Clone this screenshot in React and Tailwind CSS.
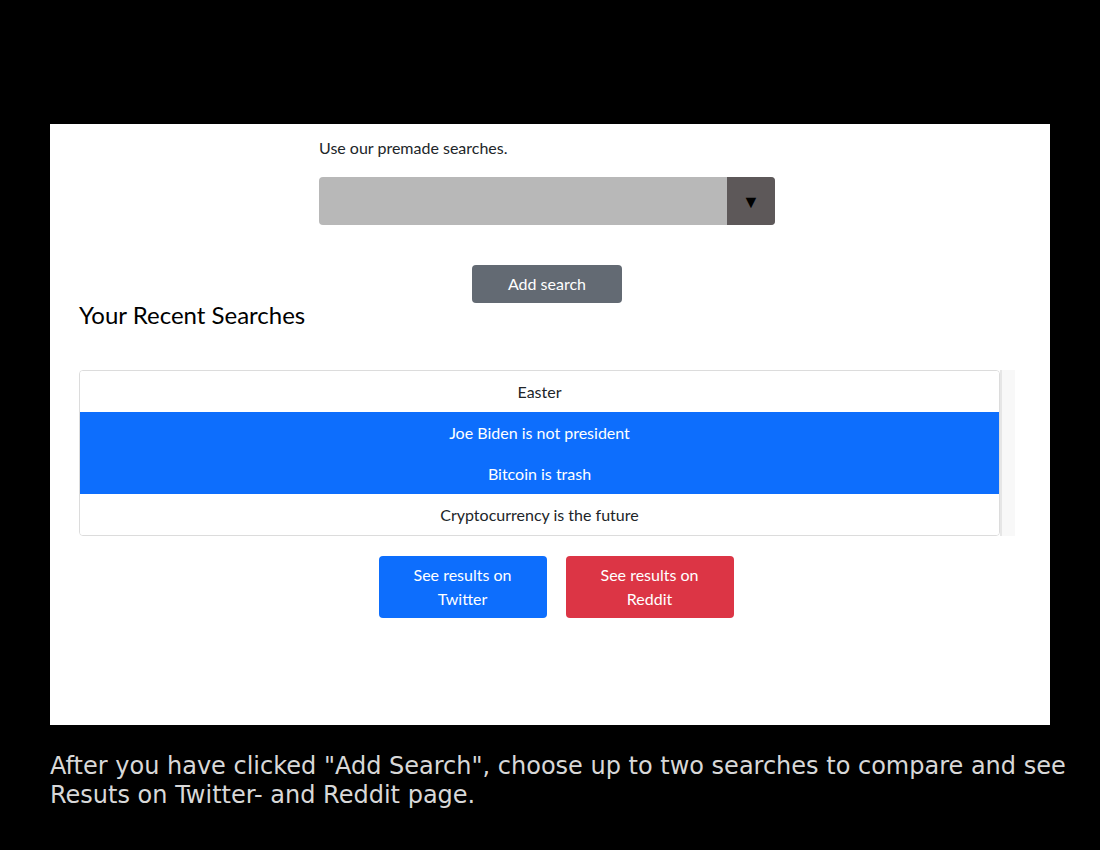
const recent = [
  { label: 'Easter', selected: false },
  { label: 'Joe Biden is not president', selected: true },
  { label: 'Bitcoin is trash', selected: true },
  { label: 'Cryptocurrency is the future', selected: false },
];

export default function App() {
  return (
    <div className="min-h-[850px] w-[1100px] bg-black pt-[124px]" style={{ fontFamily: 'Lato, "Noto Sans", sans-serif' }}>
      {/* White panel */}
      <div className="ml-[50px] h-[601px] w-[1000px] bg-white pl-[29px] pr-[35px] text-[#212529]">
        <div className="ml-[240px] w-[456px] pt-[14px]">
          <p className="text-[16px] leading-[20px]">Use our premade searches.</p>
          <div className="mt-[19px] flex h-[48px] overflow-hidden rounded-[4px] bg-[#b8b8b8]">
            <div className="flex-1" />
            <div className="flex w-[48px] items-center justify-center bg-[#5d5859] text-[18px] text-black">▼</div>
          </div>
        </div>

        <div className="mt-[40px] flex justify-center">
          <button className="h-[38px] w-[150px] rounded-[4px] bg-[#636a73] text-[16px] text-white">Add search</button>
        </div>

        <h2 className="-mt-[2px] text-[24px] leading-[28px] text-black">Your Recent Searches</h2>

        {/* Recent searches list */}
        <div className="mt-[41px] flex">
          <div className="w-[921px] overflow-hidden rounded-[4px] border border-[#dcdcdc]">
            {recent.map((r) => (
              <div
                key={r.label}
                className={`flex h-[41px] items-center justify-center text-[16px] ${r.selected ? 'bg-[#0d6efd] text-white' : 'bg-white text-[#212529]'}`}
              >
                {r.label}
              </div>
            ))}
          </div>
          <div className="w-[15px] border-l-[2px] border-[#e6e6e6] bg-[#f8f8f8]" />
        </div>

        <div className="mt-[20px] flex justify-center gap-[19px] pl-[18px]">
          <button className="h-[62px] w-[168px] rounded-[4px] bg-[#0d6efd] px-[20px] text-[16px] leading-[24px] text-white">
            See results on Twitter
          </button>
          <button className="h-[62px] w-[168px] rounded-[4px] bg-[#dc3545] px-[20px] text-[16px] leading-[24px] text-white">
            See results on Reddit
          </button>
        </div>
      </div>

      <p
        className="ml-[50px] mt-[27px] w-[1040px] text-[24px] leading-[29px] text-[#d8d8d8]"
        style={{ fontFamily: '"DejaVu Sans", sans-serif' }}
      >
        After you have clicked "Add Search", choose up to two searches to compare and see Resuts on Twitter- and Reddit page.
      </p>
    </div>
  );
}
